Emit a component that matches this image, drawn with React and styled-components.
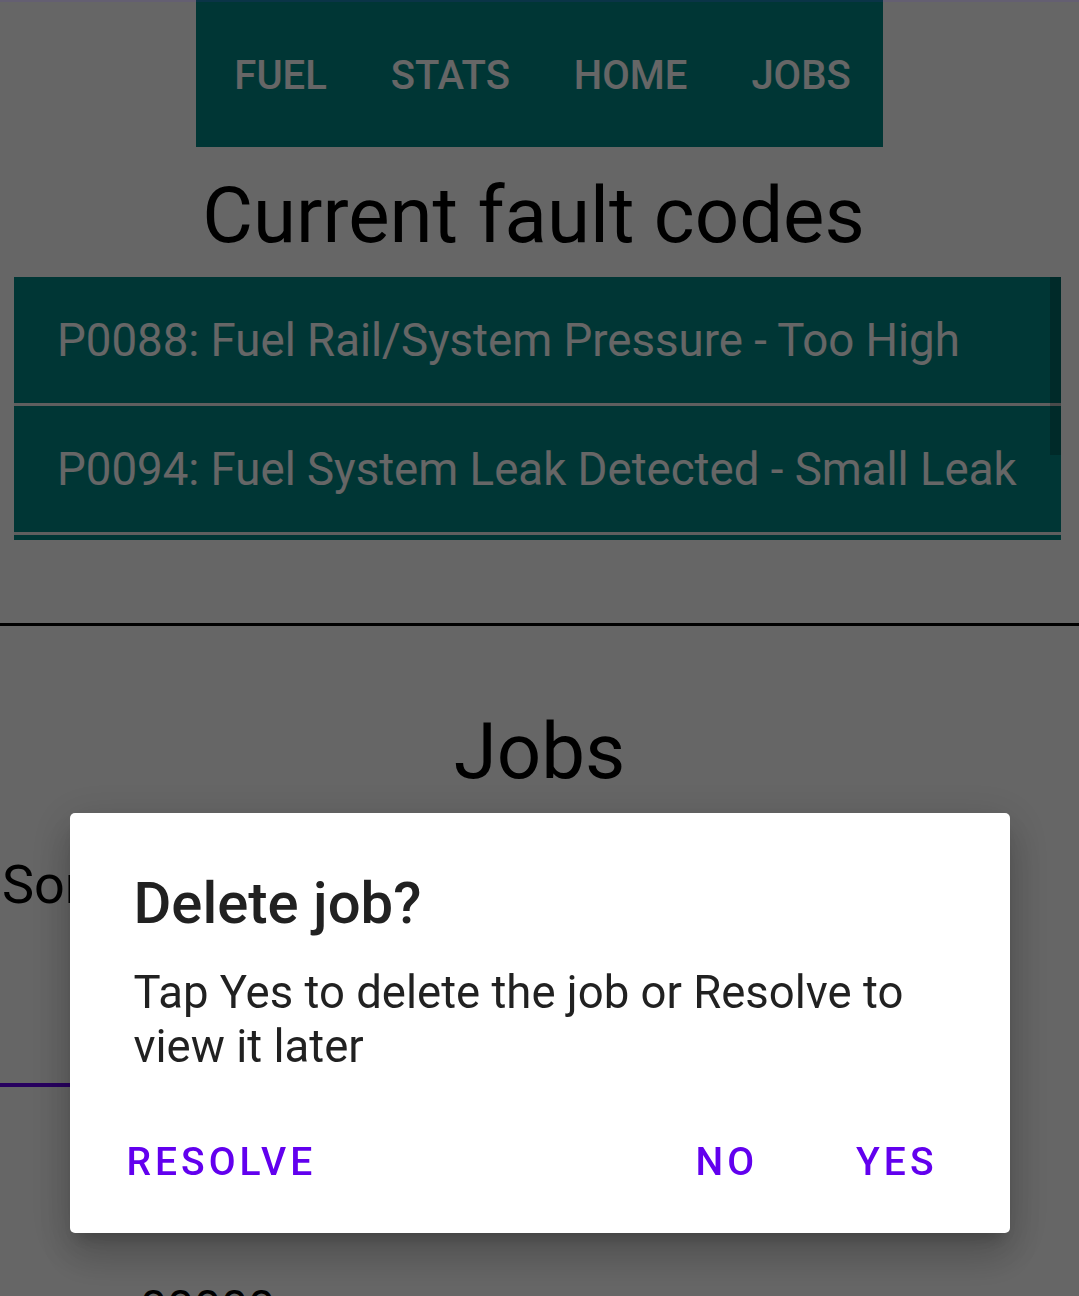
import React from 'react'
import styled, { createGlobalStyle } from 'styled-components'

const GlobalStyle = createGlobalStyle`
  html, body {
    margin: 0;
    padding: 0;
    background: #ffffff;
    font-family: Roboto, 'Noto Sans', sans-serif;
    overflow: hidden;
  }
`

const Page = styled.div`
  display: flex;
  flex-direction: column;
  height: 1296px;
  overflow: hidden;

  & > * {
    flex-shrink: 0;
  }
`

const Nav = styled.nav`
  display: flex;
  align-items: center;
  align-self: center;
  height: 147px;
  padding: 3px 0 0 6px;
  box-sizing: border-box;
  background: #018786;
`

const Tab = styled.div`
  padding: 0 32px;
  font-size: 40px;
  font-weight: 500;
  color: #ffffff;
  text-transform: uppercase;
`

const Heading = styled.h1`
  margin: ${p => p.$top}px 0 0;
  padding-right: ${p => p.$shift || 0}px;
  text-align: center;
  font-size: 78px;
  font-weight: 400;
  line-height: normal;
  color: #000000;
`

const FaultList = styled.div`
  position: relative;
  margin: 16px 0 0 14px;
  width: 1047px;
  height: 263px;
  overflow: hidden;
  background: #018786;
`

const FaultRow = styled.div`
  display: flex;
  align-items: center;
  height: 126px;
  padding-left: 43px;
  font-size: 45.6px;
  color: #ffffff;
  border-bottom: 3px solid #eeeeee;
  white-space: nowrap;
`

const Thumb = styled.div`
  position: absolute;
  top: 0;
  right: 0;
  width: 11px;
  height: 178px;
  background: rgba(0, 0, 0, 0.22);
`

const Divider = styled.hr`
  margin: 83px 0 0;
  border: none;
  height: 3px;
  background: #000000;
`

const SortLabel = styled.div`
  margin-top: 56px;
  padding-left: 2px;
  font-size: 54px;
  line-height: normal;
  color: #000000;
`

const Field = styled.div`
  margin-top: 167px;
  width: 600px;
  height: 4px;
  background: #6200ee;
`

const JobCode = styled.div`
  margin-top: 192px;
  padding-left: 140px;
  font-size: 48px;
  line-height: normal;
  color: #000000;
`

const Scrim = styled.div`
  position: fixed;
  inset: 0;
  display: flex;
  flex-direction: column;
  align-items: center;
  padding-top: 813px;
  box-sizing: border-box;
  background: rgba(0, 0, 0, 0.6);
`

const StatusLine = styled.div`
  position: absolute;
  top: 0;
  left: 0;
  right: 0;
  height: 2px;
  background: rgba(80, 40, 200, 0.12);
`

const Dialog = styled.div`
  width: 940px;
  background: #ffffff;
  border-radius: 5px;
  box-shadow: 0 11px 15px -7px rgba(0, 0, 0, 0.2),
    0 24px 38px 3px rgba(0, 0, 0, 0.14),
    0 9px 46px 8px rgba(0, 0, 0, 0.12);
`

const Title = styled.h2`
  margin: 0;
  padding: 56px 64px 0;
  font-size: 58px;
  font-weight: 500;
  line-height: normal;
  color: #212121;
`

const Message = styled.p`
  margin: 29px 0 0;
  padding: 0 64px;
  font-size: 45.5px;
  line-height: 54px;
  color: rgba(0, 0, 0, 0.87);
`

const Actions = styled.div`
  display: flex;
  align-items: center;
  margin-top: 65px;
  padding: 0 48px 48px 33px;
`

const ActionButton = styled.button`
  margin-left: ${p => p.$gap || 0}px;
  padding: 0 24px;
  border: none;
  background: none;
  font-family: Roboto, sans-serif;
  font-size: 39px;
  font-weight: 500;
  line-height: 46px;
  letter-spacing: 4px;
  color: #6200ee;
  text-transform: uppercase;
`

const Spacer = styled.div`
  flex: 1;
`

const tabs = ['Fuel', 'Stats', 'Home', 'Jobs']

const faults = [
  'P0088: Fuel Rail/System Pressure - Too High',
  'P0094: Fuel System Leak Detected - Small Leak',
  'P0171: System Too Lean - Bank 1',
]

const App = () => {
  return (
    <>
      <GlobalStyle />
      <Page>
        <Nav>
          {tabs.map(t => <Tab key={t}>{t}</Tab>)}
        </Nav>
        <Heading $top={23} $shift={12}>Current fault codes</Heading>
        <FaultList>
          {faults.map(f => <FaultRow key={f}>{f}</FaultRow>)}
          <Thumb />
        </FaultList>
        <Divider />
        <Heading $top={80}>Jobs</Heading>
        <SortLabel>Sort by</SortLabel>
        <Field />
        <JobCode>00000</JobCode>
      </Page>

      <Scrim>
        <StatusLine />
        <Dialog>
          <Title>Delete job?</Title>
          <Message>Tap Yes to delete the job or Resolve to view it later</Message>
          <Actions>
            <ActionButton>Resolve</ActionButton>
            <Spacer />
            <ActionButton>No</ActionButton>
            <ActionButton $gap={50}>Yes</ActionButton>
          </Actions>
        </Dialog>
      </Scrim>
    </>
  )
}

export default App
